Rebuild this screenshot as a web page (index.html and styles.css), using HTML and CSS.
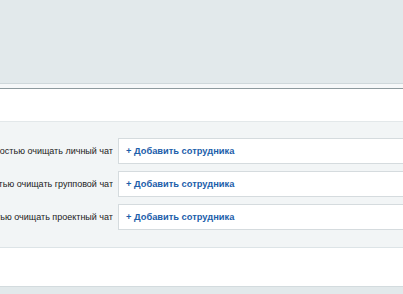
FILE: index.html
```html
<!DOCTYPE html>
<html lang="ru">
  <head>
    <meta charset="UTF-8" />
    <meta name="viewport" content="width=device-width, initial-scale=1.0" />
    <title>Настройки чата</title>
    <link rel="stylesheet" href="styles.css">
  </head>
  <body>
    <div class="top-band"></div>
    <div class="panel-head"></div>
    <div class="rights">
      <div class="row">
        <div class="label"><span>Разрешить полностью очищать личный чат</span></div>
        <div class="field"><a href="#" class="add">+ Добавить сотрудника</a></div>
      </div>
      <div class="row">
        <div class="label"><span>Разрешить полностью очищать групповой чат</span></div>
        <div class="field"><a href="#" class="add">+ Добавить сотрудника</a></div>
      </div>
      <div class="row">
        <div class="label"><span>Разрешить полностью очищать проектный чат</span></div>
        <div class="field"><a href="#" class="add">+ Добавить сотрудника</a></div>
      </div>
    </div>
    <div class="panel-foot"></div>
    <div class="bottom-band"></div>
  </body>
</html>
```

FILE: styles.css
```css
body {
  margin: 0;
  font-family: "Liberation Sans", Arial, sans-serif;
  background: #e2e9eb;
  overflow: hidden;
}
.top-band {
  height: 83px;
  background: #e2e9eb;
  border-bottom: 1px solid #cfd8db;
}
.panel-head {
  height: 33px;
  background: #fff;
  border-top: 4px solid #f6f8f9;
  box-shadow: inset 0 1px 0 #8e9a9e;
}
.rights {
  background: #f2f5f6;
  border-top: 1px solid #e3e8ea;
  border-bottom: 1px solid #dde4e7;
  padding: 16px 0 17px;
  display: flex;
  flex-direction: column;
  gap: 7px;
}
.row {
  display: flex;
  align-items: center;
}
.label {
  width: 113px;
  flex: none;
  display: flex;
  justify-content: flex-end;
  overflow: hidden;
  white-space: nowrap;
  font-size: 9px;
  color: #222;
  margin-right: 5px;
}
.field {
  flex: 1;
  height: 24px;
  background: #fff;
  border: 1px solid #d5dbde;
  border-right: none;
  display: flex;
  align-items: center;
  padding-left: 7px;
}
.add {
  font-size: 9.3px;
  font-weight: bold;
  color: #1c5eaa;
  text-decoration: none;
}
.panel-foot {
  height: 38px;
  background: #fff;
  border-bottom: 1px solid #d3dbde;
}
.bottom-band {
  height: 10px;
  background: #e2e9eb;
}
```
